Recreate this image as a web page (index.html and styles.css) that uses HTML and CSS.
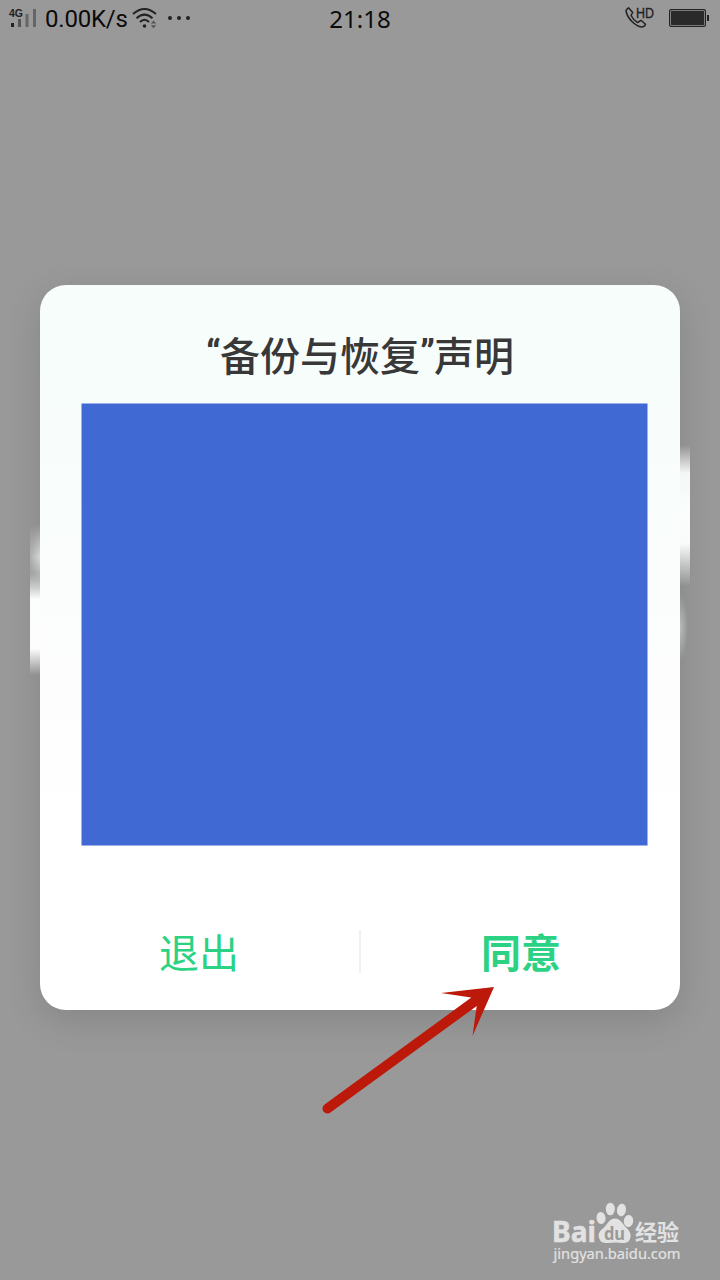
FILE: index.html
```html
<!DOCTYPE html>
<html lang="zh-CN">
<head>
  <meta charset="UTF-8">
  <meta name="viewport" content="width=device-width, initial-scale=1.0">
  <title>备份与恢复</title>
  <link rel="stylesheet" href="styles.css">
</head>
<body>

  <!-- Status bar -->
  <div class="status-bar">
    <div class="status-left">
      <svg class="signal" width="30" height="24" viewBox="0 0 30 24">
        <text x="1" y="10.500" class="signal-label" textLength="14" lengthAdjust="spacingAndGlyphs">4G</text>
        <rect x="3" y="17" width="3" height="4" fill="#222"/>
        <rect x="10" y="13" width="3" height="8" fill="#555"/>
        <rect x="17.500" y="8" width="3" height="13" fill="#666"/>
        <rect x="25" y="3" width="3" height="18" fill="#666"/>
      </svg>
      <span class="speed">0.00K/s</span>
      <svg class="wifi" width="26" height="24" viewBox="0 0 26 24" fill="none" stroke="#222" stroke-width="2">
        <path d="M1 8Q12.500-2 24 8M4.500 12.300Q12.500 5 20.500 12.300M8 16Q12.500 11.500 17 16"/>
        <circle cx="12.500" cy="20" r="1.800" fill="#222" stroke="none"/>
        <path d="M18.800 17.500L21.500 14.500L24.200 17.500ZM18.800 19.300L21.500 22.300L24.200 19.300Z" fill="#555" stroke="none"/>
      </svg>
      <svg class="dots" width="24" height="24" viewBox="0 0 24 24" fill="#222">
        <circle cx="3" cy="12" r="2"/>
        <circle cx="12" cy="12" r="2"/>
        <circle cx="21" cy="12" r="2"/>
      </svg>
    </div>
    <span class="time">21:18</span>
    <div class="status-right">
      <svg width="32" height="24" viewBox="0 0 32 24">
        <path d="M4.500 1.800Q2 3.300 2 5Q3 10.500 8 15.500T17.500 21Q20.500 21 21.500 18.300L17 14.300L13.500 16.500Q9 13.500 7 9.500L8.700 6.500Z" fill="none" stroke="#222" stroke-width="1.500" stroke-linejoin="round"/>
        <text x="12" y="11.500" class="hd-label" textLength="18" lengthAdjust="spacingAndGlyphs">HD</text>
      </svg>
      <svg class="battery" width="41" height="24" viewBox="0 0 41 24">
        <rect x=".6" y="3.600" width="35.800" height="16.800" rx="1.500" fill="none" stroke="#222" stroke-width="1.200"/>
        <rect x="2" y="5" width="33" height="14" fill="#2a2a2a"/>
        <rect x="38" y="9" width="2" height="6" fill="#222"/>
      </svg>
    </div>
  </div>

  <!-- Statement dialog -->
  <div class="dialog-wrap">
    <div class="glow glow-left"></div>
    <div class="glow glow-left-top"></div>
    <div class="glow glow-right"></div>
    <div class="glow glow-right-bottom"></div>
    <div class="dialog">
      <h2><span class="quote">“</span>备份与恢复<span class="quote">”</span>声明</h2>
      <svg class="content" width="568" height="443" viewBox="0 0 568 443">
        <rect x=".5" y=".5" width="566" height="442" fill="#4169d3"/>
      </svg>
      <div class="actions">
        <button class="exit">退出</button>
        <span class="divider"></span>
        <button class="agree">同意</button>
      </div>
    </div>
  </div>

  <svg class="arrow" width="180" height="140" viewBox="320 980 180 140">
    <path d="M327.500 1108.500L477 999.600" stroke="#bd190a" stroke-width="10" stroke-linecap="round"/>
    <path d="M494 987L441 993L471 997.500L476.700 1006L472.500 1036Z" fill="#bd190a"/>
  </svg>

  <!-- Watermark -->
  <svg class="watermark" width="140" height="70" viewBox="548 1198 140 70" fill="#e2e2e2">
    <text x="552" y="1242" class="mark-name" textLength="44" lengthAdjust="spacingAndGlyphs">Bai</text>
    <ellipse cx="601" cy="1218" rx="4.500" ry="6" transform="rotate(-8 601 1218)"/>
    <ellipse cx="610.300" cy="1209" rx="4.500" ry="6.300"/>
    <ellipse cx="621.500" cy="1210" rx="4.500" ry="6.300" transform="rotate(10 621.5 1210)"/>
    <ellipse cx="628.500" cy="1221" rx="4.700" ry="6" transform="rotate(8 628.5 1221)"/>
    <path d="M615 1218.500C609 1218.500 608 1224 603.500 1228C599 1231 597.500 1235 599.500 1239C601.500 1244 606 1243 615 1242.500C624 1243 628 1244 630 1239C632 1234 629 1230 626 1227.500C622 1224 621 1218.500 615 1218.500Z"/>
    <text x="604" y="1239.500" class="mark-du" textLength="21" lengthAdjust="spacingAndGlyphs">du</text>
    <text x="635" y="1240" class="mark-cn" textLength="44" lengthAdjust="spacingAndGlyphs">经验</text>
    <text x="553.500" y="1259" class="mark-url" textLength="127" lengthAdjust="spacingAndGlyphs">jingyan.baidu.com</text>
  </svg>

</body>
</html>
```
FILE: styles.css
```css
* {
  margin: 0;
  padding: 0;
  box-sizing: border-box;
}

body {
  font-family: "Noto Sans", "Noto Sans CJK SC", sans-serif;
  background-color: #999;
  position: relative;
  height: 1280px;
  overflow: hidden;
}

svg {
  display: block;
}

/* Status bar */
.status-bar {
  display: grid;
  grid-template-columns: 1fr auto 1fr;
  align-items: center;
  height: 36px;
  padding: 0 10px 0 8px;
  color: #0b0b0b;
}

.status-left,
.status-right {
  display: flex;
  align-items: center;
}

.status-right {
  justify-content: flex-end;
  gap: 13px;
}

.signal-label {
  font: bold 10px "Liberation Sans", sans-serif;
  fill: #222;
}

.speed {
  font: 24px Roboto, sans-serif;
  width: 83px;
  margin-left: 7px;
  letter-spacing: -0.2px;
  padding-top: 1px;
}

.wifi {
  margin-left: 4px;
}

.dots {
  margin-left: 9px;
}

.time {
  font-size: 24px;
  line-height: 34px;
  padding: 2px 0 0 2px;
}

.hd-label {
  font: 14px "Liberation Sans", sans-serif;
  fill: #222;
  stroke: #222;
  stroke-width: 0.3px;
}

/* Dialog */
.dialog-wrap {
  position: relative;
  margin: 249px 40px 0;
}

.dialog {
  position: relative;
  height: 725px;
  padding-top: 44px;
  border-radius: 26px;
  background: linear-gradient(#f6fdfb 0, #f9fdfc 30%, #fdfdfd 55%, #fff 75%);
  box-shadow: 0 10px 36px rgba(0, 0, 0, 0.13);
}

h2 {
  font-family: "Noto Sans CJK SC", sans-serif;
  font-size: 40px;
  font-weight: 500;
  line-height: 50px;
  color: #383838;
  display: flex;
  justify-content: center;
}

.quote {
  font-family: Roboto, sans-serif;
  font-weight: 800;
  font-size: 36px;
  width: 14px;
}

.content {
  margin: 24px 0 0 41px;
}

.actions {
  display: flex;
  align-items: center;
  margin-top: 84px;
}

button {
  flex: 1;
  height: 43px;
  border: none;
  background: none;
  font-family: "Noto Sans CJK SC", sans-serif;
  font-size: 40px;
  line-height: 43px;
  color: #2bd284;
}

.exit {
  font-weight: 400;
  padding-right: 1px;
}

.divider {
  width: 2px;
  height: 43px;
  margin-right: 1px;
  background-color: #f0f0f0;
}

.agree {
  font-weight: 700;
}

/* Light spots behind the dialog edges */
.glow {
  position: absolute;
  width: 10px;
  z-index: 1;
}

.glow-left {
  left: -10px;
  top: 288px;
  height: 102px;
  background: linear-gradient(transparent, #fdfdfd 26%, #fdfdfd 74%, transparent);
}

.glow-left-top {
  left: -10px;
  top: 239px;
  height: 66px;
  background: linear-gradient(transparent, #d8d8d8 50%, transparent);
  -webkit-mask-image: linear-gradient(to right, rgba(0, 0, 0, 0.4), #000);
  mask-image: linear-gradient(to right, rgba(0, 0, 0, 0.4), #000);
}

.glow-right {
  right: -10px;
  top: 160px;
  height: 141px;
  background: linear-gradient(transparent, #f5f6f6 20%, #fbfcfc 45%, #f9fafa 70%, transparent);
}

.glow-right-bottom {
  right: -8px;
  top: 310px;
  width: 8px;
  height: 65px;
  background: radial-gradient(ellipse 8px 33px at left center, #b8bcbb, transparent);
}

/* Overlays */
.arrow {
  position: absolute;
  left: 320px;
  top: 980px;
}

.watermark {
  position: absolute;
  left: 548px;
  top: 1198px;
}

.mark-name {
  font: bold 28px "Noto Sans", sans-serif;
  stroke: #e2e2e2;
  stroke-width: 0.5px;
}

.mark-du {
  font: bold 18px "Noto Sans", sans-serif;
  fill: #999;
}

.mark-cn {
  font: bold 22px "Noto Sans CJK SC", sans-serif;
}

.mark-url {
  font: 14px "Noto Sans", sans-serif;
  stroke: #e2e2e2;
  stroke-width: 0.2px;
}
```
